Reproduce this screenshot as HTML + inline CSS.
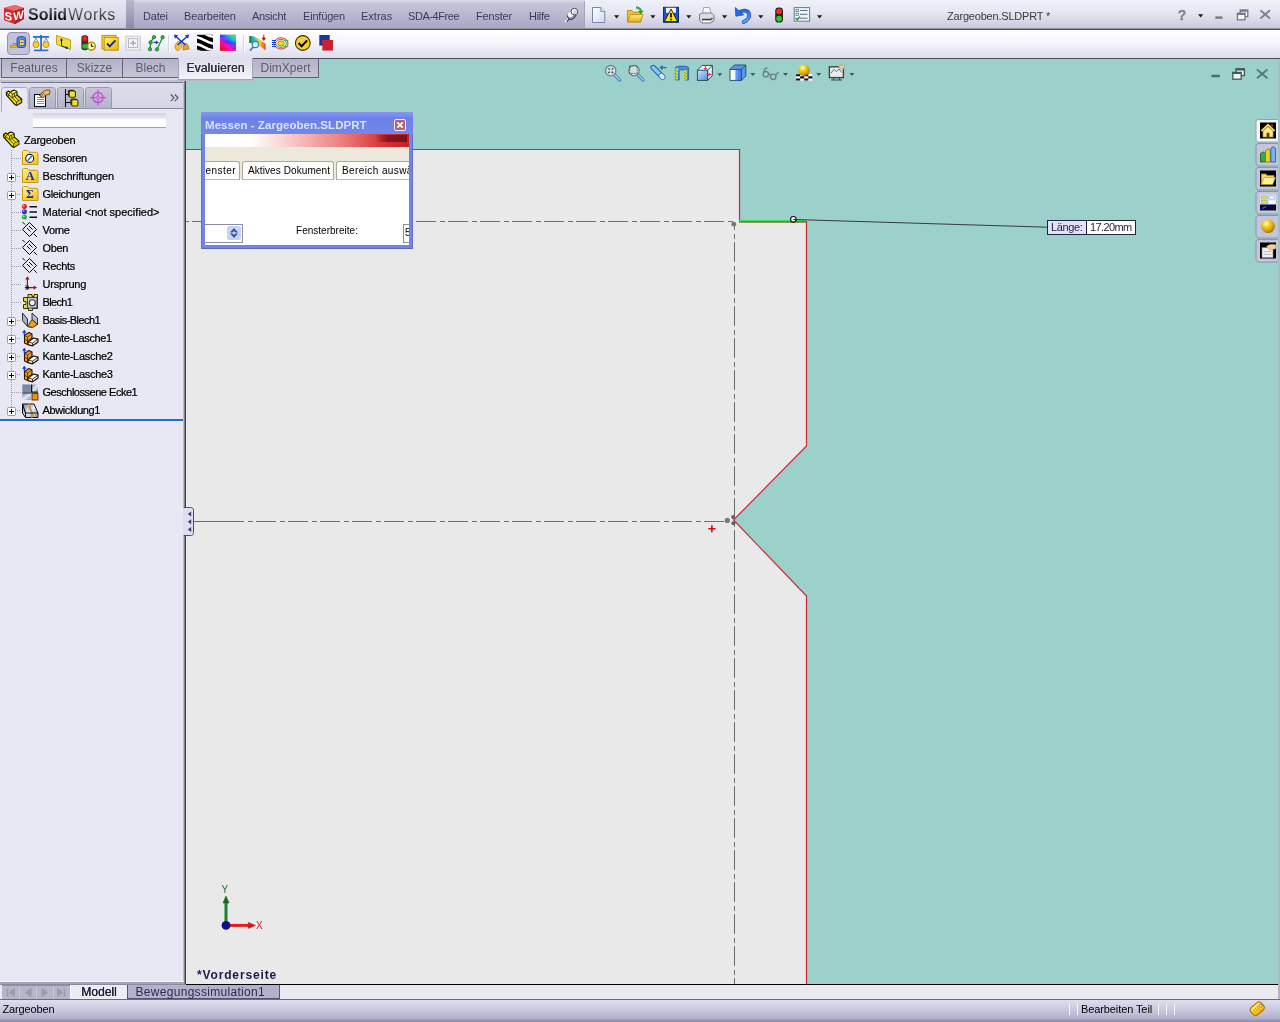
<!DOCTYPE html>
<html lang="de">
<head>
<meta charset="utf-8">
<title>SolidWorks - Zargeoben.SLDPRT</title>
<style>
html,body{margin:0;padding:0;}
body{width:1280px;height:1022px;overflow:hidden;position:relative;background:#e4e6f2;font-family:"Liberation Sans",sans-serif;font-size:11px;color:#000;}
.abs{position:absolute;}
#titlebar{position:absolute;left:0;top:0;width:1280px;height:30px;background:linear-gradient(#eeeef8 0%,#e2e2f0 40%,#c6c6da 85%,#b4b4c8 100%);}
#titlebar .bline{position:absolute;left:0;top:28px;width:1280px;height:2px;background:linear-gradient(#8e8ea6 0,#8e8ea6 50%,#50505e 50%,#50505e 100%);}
#logoarea{position:absolute;left:0;top:0;width:126px;height:28px;background:linear-gradient(#e6e6f2 0%,#dcdcea 50%,#c8c8dc 100%);}
#menusep{position:absolute;left:126px;top:0;width:8px;height:28px;background:linear-gradient(#b8b8cc,#8c8caa);}
#menubar{position:absolute;left:134px;top:0;width:450px;height:28px;background:linear-gradient(#dcdcea 0%,#c6c6da 12%,#b8b8d0 50%,#a8a8c4 100%);}
.menu{position:absolute;top:10px;font-size:11px;line-height:13px;color:#3a3c5c;white-space:nowrap;}
#tbright{position:absolute;left:584px;top:0;width:696px;height:28px;background:linear-gradient(#f0f0fa 0%,#e6e6f2 45%,#cacade 100%);}
#toolbar{position:absolute;left:0;top:30px;width:1280px;height:29px;background:linear-gradient(#ffffff 0%,#f6f6fc 40%,#dcdcec 100%);}
#toolbar .bline{position:absolute;left:0;top:28px;width:1280px;height:1px;background:#4e4e5c;}
#viewport{position:absolute;left:186px;top:59px;width:1094px;height:925px;background:#9bd0cb;overflow:hidden;}
.tree{-webkit-text-stroke:0.22px #000;}
.mtab{position:absolute;top:27px;height:19px;box-sizing:border-box;border:1px solid #a8a89c;border-bottom:1px solid #b8b8b0;border-radius:3px 3px 0 0;background:#fdfdfb;font-size:10px;line-height:16px;color:#000;white-space:nowrap;}
#leftpanel{position:absolute;left:0;top:59px;width:183px;height:925px;background:#e7e8f4;}
#splitter{position:absolute;left:183px;top:59px;width:3px;height:925px;background:linear-gradient(90deg,#bcbccc 0,#bcbccc 33.3%,#82828f 33.3%,#82828f 66.6%,#3e3e4e 66.6%);}
#cmtabs{position:absolute;left:0;top:59px;width:320px;height:24px;}
.cmtab{position:absolute;top:0;height:19px;border:1px solid #62627a;border-top:none;background:linear-gradient(#b2b2c8,#bebed2 60%,#c4c4d6);color:#5c5c6c;font-size:12px;line-height:19px;text-align:center;box-sizing:border-box;white-space:nowrap;}
.cmtab.act{text-shadow:0.35px 0 0 #30303c;top:-1px;height:22px;background:linear-gradient(#dedeea,#f2f2f8);border:1px solid #a4a4ba;border-top:none;color:#30303c;line-height:21px;letter-spacing:0.15px;box-shadow:0 1px 0 #b8b8c8;}
#bottombar{position:absolute;left:0;top:984px;width:1280px;height:16px;background:#eaeaf2;}
#statusbar{position:absolute;left:0;top:1000px;width:1280px;height:22px;background:linear-gradient(#dedeee 0%,#d0d0e4 30%,#c0c0d8 60%,#b0b0cc 84%,#9494b0 94%,#8c8ca6 100%);}
.tree{position:absolute;left:0;height:18px;line-height:18px;white-space:nowrap;font-size:11px;}
</style>
</head>
<body>
<div id="root" style="position:absolute;left:0;top:0;width:1280px;height:1022px;overflow:hidden;will-change:transform;">
<div id="titlebar">
  <div id="tbright"></div>
  <div id="logoarea"></div>
  <div id="menusep"></div>
  <div id="menubar"></div>
  <svg class="abs" style="left:3px;top:4px" width="23" height="21" viewBox="0 0 23 21">
    <defs><linearGradient id="cubeF" x1="0" y1="0" x2="0" y2="1"><stop offset="0" stop-color="#e8484a"/><stop offset="1" stop-color="#a81418"/></linearGradient></defs>
    <polygon points="1,4 12,1 21,4 21,15 12,20 1,16" fill="url(#cubeF)"/>
    <polygon points="1,4 12,1 21,4 11,7" fill="#f0686a"/>
    <polygon points="11,7 21,4 21,15 12,20" fill="#b81c20"/>
    <polygon points="1,4 11,7 12,20 1,16" fill="#d42c30"/>
    <text x="1.4" y="15.6" font-family="Liberation Sans, sans-serif" font-weight="bold" font-size="11.5" fill="#fff" transform="skewY(8)">S</text>
    <text x="10.200" y="19.2" font-family="Liberation Sans, sans-serif" font-weight="bold" font-size="11.5" fill="#fff" transform="skewY(-14)" textLength="10.500" lengthAdjust="spacingAndGlyphs">W</text>
  </svg>
  <div class="abs" id="swname" style="left:28px;top:5px;font-size:16px;line-height:20px;white-space:nowrap;"><b style="letter-spacing:0px;color:transparent;background:linear-gradient(#5a5a62 25%,#000 80%);-webkit-background-clip:text;background-clip:text;">Solid</b><span style="letter-spacing:0.55px;margin-left:1px;color:transparent;background:linear-gradient(#6e6e78 25%,#26262c 80%);-webkit-background-clip:text;background-clip:text;">Works</span></div>
  <span class="menu" style="left:143px;letter-spacing:-0.2px">Datei</span>
  <span class="menu" style="left:184px;letter-spacing:-0.14px">Bearbeiten</span>
  <span class="menu" style="left:252px;letter-spacing:-0.3px">Ansicht</span>
  <span class="menu" style="left:303px;letter-spacing:-0.18px">Einfügen</span>
  <span class="menu" style="left:361px;letter-spacing:0px">Extras</span>
  <span class="menu" style="left:408px;letter-spacing:-0.44px">SDA-4Free</span>
  <span class="menu" style="left:476px;letter-spacing:-0.19px">Fenster</span>
  <span class="menu" style="left:529px;letter-spacing:-0.3px">Hilfe</span>
  <div class="abs" id="doctitle" style="left:947px;top:10px;font-size:11px;line-height:13px;color:#3a3a42;white-space:nowrap;letter-spacing:-0.2px">Zargeoben.SLDPRT *</div>
  <div class="bline"></div>
<svg class="abs" id="stdicons" style="left:560px;top:0" width="720" height="30" viewBox="560 0 720 30">
  <defs>
    <linearGradient id="pg" x1="0" y1="0" x2="1" y2="1"><stop offset="0" stop-color="#ffffff"/><stop offset="1" stop-color="#d4dcec"/></linearGradient>
    <linearGradient id="fold" x1="0" y1="0" x2="0" y2="1"><stop offset="0" stop-color="#fff08a"/><stop offset="1" stop-color="#e8a818"/></linearGradient>
    <linearGradient id="und" x1="0" y1="0" x2="0" y2="1"><stop offset="0" stop-color="#2a6ae0"/><stop offset="1" stop-color="#6aa8f4"/></linearGradient>
  </defs>
  <!-- pin -->
  <path d="M565 22l3.400-3.400" stroke="#f4f4fa" stroke-width="1.400"/>
  <path d="M566.800 21.400l2.600-2.600" stroke="#30303c" stroke-width="1.200"/>
  <ellipse cx="571.600" cy="15.600" rx="4.300" ry="3.600" transform="rotate(-40 571.600 15.600)" fill="#8c8ca0" stroke="#34343f" stroke-width="0.900"/>
  <ellipse cx="570.600" cy="14.600" rx="3" ry="2.600" transform="rotate(-40 570.600 14.600)" fill="#f6f6fb"/>
  <circle cx="574.400" cy="11.600" r="3.300" fill="#f2f2f8" stroke="#3c3c48" stroke-width="0.900"/>
  <circle cx="575.200" cy="12.400" r="1.800" fill="#d0d0dc"/>
  <path d="M584.500 1v27" stroke="#a4a4ba" stroke-width="1"/>
  <!-- new -->
  <path d="M592.500 7.500h8.300l4 4v11h-12.300z" fill="url(#pg)" stroke="#7888a4" stroke-width="1"/>
  <path d="M600.800 7.500v4h4" fill="#e4e8f2" stroke="#7888a4" stroke-width="0.900"/>
  <polygon points="614,15.2 619.2,15.2 616.6,18.4" fill="#1a1a22"/>
  <!-- open -->
  <path d="M627.500 22v-11.500h4.500l1.500 1.800h7.500v9.700z" fill="#f0c030" stroke="#b88a10" stroke-width="0.900"/>
  <path d="M627.500 22l3-7.500h12.500l-2.500 7.500z" fill="url(#fold)" stroke="#c09010" stroke-width="0.900"/>
  <path d="M636 7.500c3 0 4.600 1 5 3.800" stroke="#20a830" stroke-width="1.800" fill="none"/>
  <path d="M637.800 10.800h6l-3 3.800z" fill="#20a830"/>
  <polygon points="650.3,15.2 655.5,15.2 652.9,18.4" fill="#1a1a22"/>
  <!-- save w/ warning -->
  <rect x="663.500" y="7.300" width="15" height="15" fill="#1c54c8" stroke="#0c2c80" stroke-width="1"/>
  <rect x="666" y="7.800" width="10" height="5" fill="#f4f4f8"/>
  <path d="M671 9l6.600 12.600h-13.200z" fill="#f8e020" stroke="#201800" stroke-width="0.900"/>
  <path d="M671 13v4.600M671 18.800v1.400" stroke="#000" stroke-width="1.600"/>
  <polygon points="686.2,15.2 691.4000000000001,15.2 688.8000000000001,18.4" fill="#1a1a22"/>
  <!-- printer -->
  <path d="M702.500 14l1-6.500h6l2 6.500z" fill="#f4f8ff" stroke="#8aa0c0" stroke-width="0.900"/>
  <path d="M699.500 14.500l3-1.500h9l2.500 2.500v5l-3.500 2.500h-8.500l-2.500-3z" fill="#dcdce4" stroke="#70707c" stroke-width="0.900"/>
  <path d="M702 19.500h8.500l2-1.600" stroke="#3c3c44" stroke-width="1.300" fill="none"/>
  <path d="M703.500 21.500h6" stroke="#fff" stroke-width="1.200"/>
  <polygon points="722,15.2 727.2,15.2 724.6,18.4" fill="#1a1a22"/>
  <!-- undo -->
  <path d="M738.200 13.200c4-3.600 9.800-3.400 10.800 0.800c0.800 3.600-2 6.400-5.400 8" stroke="#1a50c0" stroke-width="3.800" fill="none" stroke-linecap="round"/>
  <path d="M738.200 13.200c4-3.600 9.800-3.400 10.800 0.800c0.800 3.600-2 6.400-5.400 8" stroke="url(#und)" stroke-width="2.400" fill="none" stroke-linecap="round"/>
  <path d="M735.300 7.600l0.600 8.600 7.800-1.400z" fill="#2a6ae0" stroke="#1a50c0" stroke-width="0.800"/>
  <polygon points="758.2,15.2 763.4000000000001,15.2 760.8000000000001,18.4" fill="#1a1a22"/>
  <!-- traffic light -->
  <rect x="775.200" y="7.400" width="7.800" height="15.200" rx="3.400" fill="#2c2418"/>
  <circle cx="779.100" cy="11.300" r="2.900" fill="#f02828"/>
  <circle cx="779.100" cy="18.600" r="2.900" fill="#28c838"/>
  <!-- options -->
  <rect x="794.200" y="7.600" width="15.400" height="13.600" fill="#f0f4f8" stroke="#6a7a90" stroke-width="1"/>
  <path d="M800 10.500h7.500M800 14.300h7.500M800 18.200h7.500" stroke="#5a6a80" stroke-width="1"/>
  <rect x="796" y="9.300" width="2.400" height="2.400" fill="none" stroke="#5a6a80" stroke-width="0.700"/>
  <rect x="796" y="13.100" width="2.400" height="2.400" fill="none" stroke="#5a6a80" stroke-width="0.700"/>
  <path d="M795.600 18l1.600 1.800 2.600-3" stroke="#18a028" stroke-width="1.500" fill="none"/>
  <polygon points="817,15.2 822.2,15.2 819.6,18.4" fill="#1a1a22"/>
  <!-- window controls -->
  <text x="1177.800" y="20" font-family="Liberation Sans, sans-serif" font-weight="bold" font-size="14" fill="#8a8a9e" stroke="#77778c" stroke-width="0.400">?</text>
  <polygon points="1198,14.2 1203.2,14.2 1200.6,17.4" fill="#1a1a22"/>
  <rect x="1215.300" y="16.400" width="7.200" height="2.400" fill="#77778e"/>
  <g fill="#f4f4fa" stroke="#77778e" stroke-width="1.300"><rect x="1240.200" y="10" width="7.600" height="6.600"/><rect x="1237.400" y="13.200" width="7.600" height="6.600"/></g>
  <path d="M1240.200 10.700h7.600M1237.400 13.900h7.600" stroke="#77778e" stroke-width="2"/>
  <path d="M1260.400 10.200l9.600 8.400M1270 10.200l-9.600 8.400" stroke="#80809a" stroke-width="2"/>
</svg>
</div>
<div id="toolbar"><div class="bline"></div></div>
<svg class="abs" id="cmicons" style="left:0;top:30px" width="340" height="28" viewBox="0 30 340 28">
  <defs>
    <linearGradient id="yel" x1="0" y1="0" x2="1" y2="1"><stop offset="0" stop-color="#fff27a"/><stop offset="1" stop-color="#e8b800"/></linearGradient>
    <linearGradient id="rb1" gradientUnits="userSpaceOnUse" x1="220" y1="0" x2="236" y2="0"><stop offset="0" stop-color="#2070ff"/><stop offset="0.450" stop-color="#10e0c0"/><stop offset="1" stop-color="#50f010"/></linearGradient><linearGradient id="rb1b" gradientUnits="userSpaceOnUse" x1="220" y1="0" x2="236" y2="0"><stop offset="0" stop-color="#3030ff"/><stop offset="0.500" stop-color="#1090ff"/><stop offset="1" stop-color="#10e0a0"/></linearGradient>
    <linearGradient id="rb2" gradientUnits="userSpaceOnUse" x1="220" y1="0" x2="236" y2="0"><stop offset="0" stop-color="#e010e0"/><stop offset="0.500" stop-color="#5020ff"/><stop offset="1" stop-color="#1060ff"/></linearGradient>
    <linearGradient id="rb3" gradientUnits="userSpaceOnUse" x1="220" y1="0" x2="236" y2="0"><stop offset="0" stop-color="#ff1040"/><stop offset="0.500" stop-color="#ff10c0"/><stop offset="1" stop-color="#8020ff"/></linearGradient><linearGradient id="rb4" gradientUnits="userSpaceOnUse" x1="220" y1="0" x2="236" y2="0"><stop offset="0" stop-color="#e01010"/><stop offset="0.500" stop-color="#ff1050"/><stop offset="1" stop-color="#ff20d0"/></linearGradient>
    <linearGradient id="rbsweep" x1="0" y1="0" x2="1" y2="0"><stop offset="0" stop-color="#20a040"/><stop offset="0.3" stop-color="#30c0e0"/><stop offset="0.6" stop-color="#f0e020"/><stop offset="1" stop-color="#f04010"/></linearGradient>
  </defs>
  <!-- measure (selected) -->
  <rect x="7.5" y="32.5" width="22" height="22" rx="3.5" fill="#c2c2de" stroke="#9292b4"/>
  <rect x="10.5" y="45.5" width="8" height="2" fill="#f0c000" stroke="#b08000" stroke-width="0.6"/>
  <path d="M12.5 43.8h5" stroke="#707080" stroke-width="1"/>
  <rect x="17" y="36.7" width="8.6" height="10.8" rx="2.6" fill="#5a86d8" stroke="#2a4890" stroke-width="0.9"/>
  <rect x="19.6" y="39.6" width="4.6" height="5.8" rx="1" fill="#f4e060" stroke="#40506c" stroke-width="0.7"/>
  <path d="M20.6 42.5h2.6" stroke="#505050" stroke-width="0.9"/>
  <!-- scales -->
  <rect x="33" y="36" width="16" height="1.8" fill="#2a6ad8"/>
  <rect x="40.2" y="35" width="1.8" height="15" fill="#2a6ad8"/>
  <rect x="34" y="49.6" width="14.4" height="1.6" fill="#2a6ad8"/>
  <path d="M36 38l-2.6 5M36 38l2.6 5M46 38l-2.6 5M46 38l2.6 5" stroke="#4a6a9a" stroke-width="0.7" fill="none"/>
  <ellipse cx="36" cy="44.6" rx="3.1" ry="3" fill="#f6d030" stroke="#c07818" stroke-width="0.8"/>
  <ellipse cx="46" cy="44.6" rx="3.1" ry="3" fill="#f6d030" stroke="#c07818" stroke-width="0.8"/>
  <!-- section properties -->
  <polygon points="56.5,35.4 70.5,40 70.5,49.6 56.5,44.2" fill="#f4dc38" stroke="#b89818" stroke-width="0.9"/>
  <path d="M61.500 46v-6.500M61.500 46l6 2" stroke="#102070" stroke-width="1" fill="none"/><path d="M61.500 38.200l-1.700 2.400h3.400zM68.800 48.500l-2.700-2.200-0.700 2.400z" fill="#102070"/>
  <!-- traffic light + clock -->
  <rect x="81.4" y="35.2" width="6.8" height="15" rx="2.6" fill="#3c3424"/>
  <circle cx="84.8" cy="38.6" r="2.5" fill="#f02020"/>
  <circle cx="84.8" cy="46.2" r="2.5" fill="#20c030"/>
  <circle cx="91.4" cy="46.2" r="3.9" fill="#fff8c0" stroke="#c09000" stroke-width="1.6"/>
  <path d="M91.4 43.8v2.6h2" stroke="#000" stroke-width="1" fill="none"/>
  <!-- check -->
  <rect x="102" y="35.4" width="14" height="13.4" fill="#f8d848" stroke="#c09010" stroke-width="1"/>
  <rect x="104.2" y="37.4" width="14" height="12.8" fill="url(#yel)" stroke="#c09010" stroke-width="1"/>
  <path d="M107 43.4l2.8 3 5.6-6" stroke="#202090" stroke-width="1.8" fill="none"/>
  <!-- gray plus -->
  <rect x="125.900" y="36.200" width="14.400" height="13.800" fill="#f0f0f6" stroke="#c6c6d0" stroke-width="1"/>
  <rect x="128.500" y="38.700" width="9.200" height="8.800" fill="#f8f8fc" stroke="#b4b4be" stroke-width="1"/>
  <path d="M130.300 43.100h5.600M133.100 40.400v5.400" stroke="#b0b0ba" stroke-width="1.800"/>
  <!-- deviation -->
  <path d="M154 37.2l-3.4 5-0.6 7M162.6 37.2L157 49.4" stroke="#209030" stroke-width="1.3" fill="none"/>
  <g fill="#30c040" stroke="#106018" stroke-width="0.7"><circle cx="154" cy="37.2" r="1.7"/><circle cx="150.6" cy="42.4" r="1.7"/><circle cx="150" cy="49.2" r="1.7"/><circle cx="162.6" cy="37.2" r="1.7"/><circle cx="157" cy="49.4" r="1.7"/></g>
  <path d="M153.4 42.4h3.2" stroke="#1840d0" stroke-width="1.4"/><path d="M156 40.4l2.8 2-2.8 2z" fill="#1840d0"/>
  <!-- separators -->
  <path d="M168.500 35v18" stroke="#d4d4e2" stroke-width="1"/><path d="M169.500 35v18" stroke="#fafaff" stroke-width="1"/>
  <path d="M243.500 35v18" stroke="#d4d4e2" stroke-width="1"/><path d="M244.500 35v18" stroke="#fafaff" stroke-width="1"/>
  <!-- import diagnostics -->
  <path d="M176 44c2-4 5-3 6 0s-2 5-4 7c-3-2-4-4-2-7z" fill="#f4c040" stroke="#c07818" stroke-width="0.8"/>
  <path d="M184 44c2-2 4 0 5 5l-6 1z" fill="#f0a030" stroke="#b06818" stroke-width="0.8"/>
  <path d="M175.4 36l10 9M187.6 36l-10 9" stroke="#1838c8" stroke-width="1.5" fill="none"/>
  <path d="M174 34.6l4.2 0.6-3.4 3.6zM189 34.6l-4.2 0.6 3.4 3.6z" fill="#1838c8"/>
  <!-- zebra -->
  <clipPath id="zclip"><rect x="197" y="34.800" width="16" height="16"/></clipPath>
  <rect x="197" y="34.800" width="16" height="16" fill="#000"/>
  <g clip-path="url(#zclip)" fill="none" stroke="#fff" stroke-width="2.600">
    <path d="M196 30.400C202 30.400 207 36.800 214 36.800"/>
    <path d="M196 37.200C202 37.200 207 43.600 214 43.600"/>
    <path d="M196 44.000C202 44.000 207 50.400 214 50.400"/>
    <path d="M196 50.800C202 50.800 207 57.200 214 57.200"/>
  </g>
  <!-- rainbow -->
  <clipPath id="rclip"><rect x="220" y="34.800" width="16" height="16"/></clipPath>
  <filter id="rblur" x="-10%" y="-10%" width="120%" height="120%"><feGaussianBlur stdDeviation="1.100"/></filter>
  <rect x="220" y="34.800" width="16" height="16" fill="#ff20a0"/>
  <g clip-path="url(#rclip)"><g fill="none" stroke-width="4.600" filter="url(#rblur)">
    <path d="M218 31.500C226 31.500 230 36 238 36" stroke="url(#rb1)"/>
    <path d="M218 35.800C226 35.800 230 40.300 238 40.300" stroke="url(#rb1b)"/>
    <path d="M218 40C226 40 230 44.500 238 44.500" stroke="url(#rb2)"/>
    <path d="M218 44.400C226 44.400 230 48.900 238 48.900" stroke="url(#rb3)"/>
    <path d="M218 48.800C226 48.800 230 53.300 238 53.300" stroke="url(#rb4)"/>
  </g></g>
  <!-- draft analysis -->
  <path d="M250 36c4 0 9 2 15.600 8v6.400c-6-5-10-7-15.600-7.400z" fill="url(#rbsweep)"/>
  <path d="M250 36v7" stroke="#107030" stroke-width="1.4"/>
  <circle cx="255.400" cy="44.400" r="3.200" fill="#d8f0f8" fill-opacity="0.7" stroke="#4878b0" stroke-width="1.200"/>
  <path d="M253.200 47l-3.200 3.600" stroke="#4878b0" stroke-width="1.800"/>
  <path d="M263.800 34.600v5M262.300 38l1.500 2.400 1.500-2.400z" stroke="#c01010" stroke-width="0.9" fill="#c01010"/>
  <!-- undercut -->
  <ellipse cx="281" cy="43.400" rx="7" ry="5.600" fill="none" stroke="#e03020" stroke-width="1"/>
  <ellipse cx="281" cy="43.400" rx="5.400" ry="4" fill="none" stroke="#30a840" stroke-width="1"/>
  <ellipse cx="281" cy="43.400" rx="3.200" ry="2.500" fill="#f8e020" stroke="#e07010" stroke-width="1"/>
  <path d="M272 40.500h3.500M272 42.500h3.500M272 44.500h3.500M272 46.500h3.500" stroke="#1838c8" stroke-width="1" shape-rendering="crispEdges"/>
  <path d="M284 40.400h4.400M284 46.800h4.400" stroke="#30a840" stroke-width="0.9"/>
  <!-- check circle -->
  <circle cx="302.800" cy="43" r="7.400" fill="#f4d030" stroke="#403000" stroke-width="1.100"/>
  <path d="M298.600 43l3 3.200 5.600-5.800" stroke="#000" stroke-width="2" fill="none"/>
  <!-- squares -->
  <rect x="319.300" y="35" width="10.400" height="10.600" fill="#1c3a8c"/>
  <rect x="322.400" y="40" width="10.600" height="10.600" fill="#d02030"/>
</svg>
<div id="leftpanel"><div class="abs" style="left:0;top:0;width:184px;height:19px;background:#c8c8d8;"></div><div class="abs" style="left:0;top:19px;width:184px;height:2px;background:#dadae6;"></div><div class="abs" style="left:0;top:21px;width:184px;height:2px;background:#c0c0d0;"></div><div class="abs" style="left:1px;top:23px;width:183px;height:1px;background:#767690;"></div><div class="abs" style="left:1px;top:24px;width:182px;height:25px;background:linear-gradient(#dcdcea,#d6d6e6);"></div></div>
<svg class="abs" id="lpicons" style="left:0;top:78px" width="186" height="350" viewBox="0 78 186 350">
  <defs>
    <linearGradient id="tfold" x1="0" y1="0" x2="0.600" y2="1"><stop offset="0" stop-color="#fff690"/><stop offset="1" stop-color="#f6c432"/></linearGradient>
    <linearGradient id="tabg" x1="0" y1="0" x2="0" y2="1"><stop offset="0" stop-color="#c6c6d8"/><stop offset="1" stop-color="#b4b4c8"/></linearGradient>
    <linearGradient id="filt" x1="0" y1="0" x2="0" y2="1"><stop offset="0" stop-color="#d2d2de"/><stop offset="0.350" stop-color="#e8e8f0"/><stop offset="0.500" stop-color="#ffffff"/><stop offset="1" stop-color="#ffffff"/></linearGradient>
    <linearGradient id="metal" x1="0" y1="0" x2="1" y2="1"><stop offset="0" stop-color="#7888a8"/><stop offset="0.500" stop-color="#e8ecf4"/><stop offset="1" stop-color="#8090a8"/></linearGradient>
  </defs>
  <!-- FM tabs -->
  <path d="M28 108.500h155" stroke="#8088a0" stroke-width="1"/>
  <g fill="url(#tabg)" stroke="#9898b0" stroke-width="1">
    <path d="M29.500 108.500v-18c0-2 1-3 3-3h20c2 0 3 1 3 3v18z"/>
    <path d="M57.500 108.500v-18c0-2 1-3 3-3h20c2 0 3 1 3 3v18z"/>
    <path d="M85.500 108.500v-18c0-2 1-3 3-3h20c2 0 3 1 3 3v18z"/>
  </g>
  <path d="M1.500 112v-21.500c0-2 1-3 3-3h20.500c2 0 3 1 3 3v18" fill="#e8e9f5" stroke="#a8a8c0" stroke-width="1"/>
  <rect x="2" y="104" width="25.500" height="8" fill="#e8e9f5"/>
  <!-- tab icon 1: part -->
  <g transform="translate(6 89.8)" stroke-linejoin="round"><path d="M0.400 2.800L2.600 1.200L4.400 2.600L6 1L8.200 0.400L10.800 1.800L11.200 5.400L15.600 9.200L15.700 12.600L10.400 15.700L8.600 14.500L0.500 5.400Z" fill="#f4e020" stroke="#1c1800" stroke-width="1.200"/><path d="M0.400 2.800L2.400 4.600L10.400 12L10.400 15.700M10.400 12L15.600 9.200M2.400 4.600L2.500 6.800M2.400 4.600L4.400 2.600M4.400 2.600L6.400 4.400L6.200 7.800M6.400 4.400L8.400 3.400L10.800 1.800M8.400 3.400L8.600 6.800L11.200 5.400M8.600 6.800L6.200 7.800M8.600 6.800L12.600 10.400" fill="none" stroke="#2c2400" stroke-width="0.800"/><path d="M6.600 1.600L8.200 1L10 2L8.400 2.800Z" fill="#fff9a0"/><path d="M10.900 12.400L15.100 10.100L15.200 12.300L10.900 14.800Z" fill="#e0b800"/></g>
  <!-- tab icon 2: property manager -->
  <rect x="34.500" y="94.500" width="11" height="12" fill="#fff" stroke="#101020" stroke-width="1.100"/>
  <path d="M36.500 97.500h7M36.500 99.500h7M36.500 101.500h7M36.500 103.500h7" stroke="#5a9ae8" stroke-width="1" shape-rendering="crispEdges"/>
  <path d="M39.500 95.500l3.500-4c2-1.500 5-2 7-1l-0.500 4-4 0.500-2.500 3z" fill="#f4b868" stroke="#5a3a10" stroke-width="0.800"/><path d="M39.800 95.200l1.800 1.800M41.200 93.800l1.800 1.800M42.600 92.400l1.800 1.800" stroke="#3a2a10" stroke-width="0.800"/>
  <!-- tab icon 3: config manager -->
  <path d="M65.500 89v18M65.500 94.500h4M65.500 102.500h6" stroke="#101020" stroke-width="1.100" fill="none"/>
  <rect x="67.800" y="89.800" width="7" height="7" rx="1.800" fill="#2c2810"/><rect x="69.200" y="91" width="6.200" height="6.200" rx="1.200" fill="#f4e030" stroke="#3c3400" stroke-width="1.100"/>
  <rect x="70.300" y="98.600" width="7" height="7" rx="1.800" fill="#2c2810"/><rect x="71.700" y="99.800" width="6.200" height="6.200" rx="1.200" fill="#f4e030" stroke="#3c3400" stroke-width="1.100"/>
  <!-- tab icon 4: dimxpert -->
  <circle cx="98" cy="97.600" r="5" fill="none" stroke="#c850e0" stroke-width="1.500"/>
  <path d="M90 97.600h16M98 89.600v16" stroke="#c850e0" stroke-width="1.300"/>
  <circle cx="98" cy="97.600" r="1.600" fill="#b4b4c8" stroke="#c850e0" stroke-width="0.800"/>
  <!-- chevrons -->
  <path d="M170.800 94.500l3.200 3.300-3.200 3.300M174.800 94.500l3.200 3.300-3.200 3.300" stroke="#55556a" stroke-width="1.200" fill="none"/>
  <!-- filter bar -->
  <rect x="33" y="113" width="133" height="14" fill="url(#filt)"/>
  <path d="M33 127.500h133" stroke="#a0a0b0" stroke-width="1"/>
  <!-- tree dotted lines -->
  <path d="M11.500 150v260" stroke="#9c9cac" stroke-width="1" stroke-dasharray="1 1" shape-rendering="crispEdges"/>
  <path d="M12 158.5h9" stroke="#9c9cac" stroke-width="1" stroke-dasharray="1 1" shape-rendering="crispEdges"/><path d="M16.5 176.5h4.5" stroke="#9c9cac" stroke-width="1" stroke-dasharray="1 1" shape-rendering="crispEdges"/><path d="M16.5 194.5h4.5" stroke="#9c9cac" stroke-width="1" stroke-dasharray="1 1" shape-rendering="crispEdges"/><path d="M12 212.5h9" stroke="#9c9cac" stroke-width="1" stroke-dasharray="1 1" shape-rendering="crispEdges"/><path d="M12 230.5h9" stroke="#9c9cac" stroke-width="1" stroke-dasharray="1 1" shape-rendering="crispEdges"/><path d="M12 248.5h9" stroke="#9c9cac" stroke-width="1" stroke-dasharray="1 1" shape-rendering="crispEdges"/><path d="M12 266.5h9" stroke="#9c9cac" stroke-width="1" stroke-dasharray="1 1" shape-rendering="crispEdges"/><path d="M12 284.5h9" stroke="#9c9cac" stroke-width="1" stroke-dasharray="1 1" shape-rendering="crispEdges"/><path d="M12 302.5h9" stroke="#9c9cac" stroke-width="1" stroke-dasharray="1 1" shape-rendering="crispEdges"/><path d="M16.5 320.5h4.5" stroke="#9c9cac" stroke-width="1" stroke-dasharray="1 1" shape-rendering="crispEdges"/><path d="M16.5 338.5h4.5" stroke="#9c9cac" stroke-width="1" stroke-dasharray="1 1" shape-rendering="crispEdges"/><path d="M16.5 356.5h4.5" stroke="#9c9cac" stroke-width="1" stroke-dasharray="1 1" shape-rendering="crispEdges"/><path d="M16.5 374.5h4.5" stroke="#9c9cac" stroke-width="1" stroke-dasharray="1 1" shape-rendering="crispEdges"/><path d="M12 392.5h9" stroke="#9c9cac" stroke-width="1" stroke-dasharray="1 1" shape-rendering="crispEdges"/><path d="M16.5 410.5h4.5" stroke="#9c9cac" stroke-width="1" stroke-dasharray="1 1" shape-rendering="crispEdges"/>
  <!-- root icon -->
  <g transform="translate(3.2 131.7)" stroke-linejoin="round"><path d="M0.400 2.800L2.600 1.200L4.400 2.600L6 1L8.200 0.400L10.800 1.800L11.200 5.400L15.600 9.200L15.700 12.600L10.400 15.700L8.600 14.500L0.500 5.400Z" fill="#f4e020" stroke="#1c1800" stroke-width="1.200"/><path d="M0.400 2.800L2.400 4.600L10.400 12L10.400 15.700M10.400 12L15.600 9.200M2.400 4.600L2.500 6.800M2.400 4.600L4.400 2.600M4.400 2.600L6.400 4.400L6.200 7.800M6.400 4.400L8.400 3.400L10.800 1.800M8.400 3.400L8.600 6.800L11.200 5.400M8.600 6.800L6.200 7.800M8.600 6.800L12.600 10.400" fill="none" stroke="#2c2400" stroke-width="0.800"/><path d="M6.600 1.600L8.200 1L10 2L8.400 2.800Z" fill="#fff9a0"/><path d="M10.900 12.400L15.100 10.100L15.200 12.300L10.900 14.800Z" fill="#e0b800"/></g>
  <!-- sensoren -->
  <path d="M22.500 164.5v-12.500c0-1 0.500-1.500 1.500-1.500h3.500l1.500 1.800h7.500c1 0 1.500 0.500 1.500 1.500v10.700z" fill="url(#tfold)" stroke="#c89818" stroke-width="1"/>
  <circle cx="29.700" cy="158.400" r="4" fill="#fff" stroke="#181c30" stroke-width="1.100"/>
  <path d="M27.600 160.800l4.200-4.800" stroke="#2860d0" stroke-width="1.300"/>
  <path d="M22.500 182.5v-12.500c0-1 0.500-1.500 1.500-1.500h3.500l1.500 1.800h7.500c1 0 1.500 0.500 1.500 1.500v10.700z" fill="url(#tfold)" stroke="#c89818" stroke-width="1"/>
  <path d="M22.500 200.5v-12.500c0-1 0.500-1.500 1.500-1.500h3.500l1.500 1.800h7.500c1 0 1.500 0.500 1.500 1.500v10.700z" fill="url(#tfold)" stroke="#c89818" stroke-width="1"/>
  <!-- material -->
  <circle cx="24.400" cy="206.600" r="2.500" fill="#e02020"/><circle cx="24.400" cy="211.800" r="2.500" fill="#2030d0"/><circle cx="24.400" cy="217" r="2.500" fill="#20b030"/>
  <circle cx="23.700" cy="205.900" r="0.900" fill="#ffb0b0"/><circle cx="23.700" cy="211.100" r="0.900" fill="#a0b0ff"/><circle cx="23.700" cy="216.300" r="0.900" fill="#b0ffb0"/>
  <path d="M29.500 206.800h7.500M29.500 212h7.500M29.500 217.200h7.500" stroke="#101010" stroke-width="1.600"/>
  <path d="M22.5 229.5L29.5 222.5L36.5 229.5L29.5 236.5Z M27.0 228.0l3.5 3.5 M29.0 226.0l3.500 3.500 M22.5 222.0l2.500 2.500 M34.0 234.0l2.800 2.800" fill="none" stroke="#000" stroke-width="1"/><path d="M22.5 247.5L29.5 240.5L36.5 247.5L29.5 254.5Z M27.0 246.0l3.5 3.5 M29.0 244.0l3.500 3.500 M22.5 240.0l2.500 2.500 M34.0 252.0l2.800 2.800" fill="none" stroke="#000" stroke-width="1"/><path d="M22.5 265.5L29.5 258.5L36.5 265.5L29.5 272.5Z M27.0 264.0l3.5 3.5 M29.0 262.0l3.500 3.500 M22.5 258.0l2.500 2.500 M34.0 270.0l2.800 2.800" fill="none" stroke="#000" stroke-width="1"/>
  <!-- origin -->
  <path d="M27.400 287.600v-9M27.400 287.600h7" stroke="#a01020" stroke-width="1.200"/>
  <path d="M25.200 279.600l2.200-3.400 2.200 3.400zM33.600 285.400l3.400 2.200-3.400 2.200z" fill="#a01020"/>
  <path d="M24.800 287.600h4.600M27.200 285.200v4.800M25.400 285.800l3.600 3.600M29 285.800l-3.600 3.600" stroke="#101010" stroke-width="0.900"/>
  <!-- blech1 -->
  <path d="M23.500 297.500h4.500v-3h4v2h2v-2h3.500v14h-5v2h-4v-2h-5v-4h2.500v-3h-2.500z" fill="#e4d458" stroke="#3a3000" stroke-width="1"/>
  <rect x="27.500" y="297.500" width="9.500" height="10.500" fill="#c8c8d0" stroke="#383838" stroke-width="0.900"/>
  <circle cx="32.300" cy="302.800" r="3" fill="#f8f8ff" stroke="#303850" stroke-width="1.100"/>
  <!-- basis-blech -->
  <path d="M22.500 313l5 6v7.500l-5-6z" fill="#a8b0d0" stroke="#202030" stroke-width="0.900"/>
  <path d="M32 313l5.500 5v6.500l-5.500-5z" fill="#b0b8d4" stroke="#202030" stroke-width="0.900"/>
  <path d="M27.500 326.500l4.500-7 5.500 5-5 3z" fill="#f0a020" stroke="#302000" stroke-width="0.900"/>
  <path d="M22.500 320.500l5 6 5 1" fill="none" stroke="#605020" stroke-width="0.900"/>
  <path d="M24.500 335.5l4.500-3 3 1.500v7.500l-4.500 3-3-1.500z" fill="#f0a020" stroke="#301800" stroke-width="1.100" stroke-linejoin="round"/><path d="M24.500 335.5l3 1.500 4.500-3M27.500 337.0v7.500M24.500 339.3l3 1.500 4.500-3" stroke="#301800" stroke-width="0.700" fill="none"/><path d="M28 342.0l5.500-4 4.500 1.200v2.800l-5.500 3.800-4.500-1.200z" fill="#f8f8f8" stroke="#181000" stroke-width="1.200" stroke-linejoin="round"/><path d="M28 342.0l4.500 1.200 5.500-4M32.500 343.2v2.600" stroke="#181000" stroke-width="0.800" fill="none"/><path d="M24.300 331.1v4" stroke="#1838c8" stroke-width="1.300"/><path d="M22.100 332.7l2.200-3 2.200 3z" fill="#1838c8"/><path d="M24.500 353.5l4.500-3 3 1.500v7.500l-4.500 3-3-1.500z" fill="#f0a020" stroke="#301800" stroke-width="1.100" stroke-linejoin="round"/><path d="M24.500 353.5l3 1.500 4.500-3M27.500 355.0v7.500M24.500 357.3l3 1.500 4.500-3" stroke="#301800" stroke-width="0.700" fill="none"/><path d="M28 360.0l5.500-4 4.500 1.200v2.800l-5.500 3.800-4.500-1.200z" fill="#f8f8f8" stroke="#181000" stroke-width="1.200" stroke-linejoin="round"/><path d="M28 360.0l4.500 1.200 5.500-4M32.500 361.2v2.600" stroke="#181000" stroke-width="0.800" fill="none"/><path d="M24.300 349.1v4" stroke="#1838c8" stroke-width="1.300"/><path d="M22.100 350.7l2.200-3 2.200 3z" fill="#1838c8"/><path d="M24.500 371.5l4.500-3 3 1.500v7.500l-4.500 3-3-1.500z" fill="#f0a020" stroke="#301800" stroke-width="1.100" stroke-linejoin="round"/><path d="M24.500 371.5l3 1.500 4.500-3M27.500 373.0v7.500M24.500 375.3l3 1.500 4.500-3" stroke="#301800" stroke-width="0.700" fill="none"/><path d="M28 378.0l5.500-4 4.500 1.200v2.800l-5.500 3.800-4.500-1.200z" fill="#f8f8f8" stroke="#181000" stroke-width="1.200" stroke-linejoin="round"/><path d="M28 378.0l4.500 1.200 5.500-4M32.500 379.2v2.600" stroke="#181000" stroke-width="0.800" fill="none"/><path d="M24.300 367.1v4" stroke="#1838c8" stroke-width="1.300"/><path d="M22.100 368.7l2.200-3 2.200 3z" fill="#1838c8"/>
  <!-- closed corner -->
  <rect x="22.300" y="384.400" width="8.500" height="8" fill="#7888a8"/>
  <rect x="32.500" y="384.400" width="5.500" height="7" fill="url(#metal)"/>
  <path d="M31.600 384.400v7.800h6.400" stroke="#101010" stroke-width="1.300" fill="none"/>
  <rect x="22.300" y="393.600" width="8.500" height="6.400" fill="url(#metal)"/>
  <rect x="32" y="393.600" width="6" height="6.400" fill="#f09010" stroke="#302000" stroke-width="0.800"/>
  <path d="M22.300 393h9" stroke="#101010" stroke-width="1"/>
  <!-- flat pattern -->
  <path d="M22.500 404h11.500l4 9v4.500h-12.500l-3-4.500z" fill="url(#metal)" stroke="#101010" stroke-width="1"/>
  <path d="M29 404c0.500 3 1.500 6 3 9v4.500" stroke="#c89040" stroke-width="2" fill="none"/>
  <path d="M25.500 413h12.500M25.500 413v4.500M22.500 404l3 9" stroke="#101010" stroke-width="1.100" fill="none"/>
  <rect x="7.500" y="173.5" width="8" height="8" rx="1" fill="#fdfdfd" stroke="#9a9aa8" stroke-width="1"/><path d="M9 177.5h5M11.500 175.0v5" stroke="#000" stroke-width="1" shape-rendering="crispEdges"/><rect x="7.500" y="191.5" width="8" height="8" rx="1" fill="#fdfdfd" stroke="#9a9aa8" stroke-width="1"/><path d="M9 195.5h5M11.500 193.0v5" stroke="#000" stroke-width="1" shape-rendering="crispEdges"/><rect x="7.500" y="317.5" width="8" height="8" rx="1" fill="#fdfdfd" stroke="#9a9aa8" stroke-width="1"/><path d="M9 321.5h5M11.500 319.0v5" stroke="#000" stroke-width="1" shape-rendering="crispEdges"/><rect x="7.500" y="335.5" width="8" height="8" rx="1" fill="#fdfdfd" stroke="#9a9aa8" stroke-width="1"/><path d="M9 339.5h5M11.500 337.0v5" stroke="#000" stroke-width="1" shape-rendering="crispEdges"/><rect x="7.500" y="353.5" width="8" height="8" rx="1" fill="#fdfdfd" stroke="#9a9aa8" stroke-width="1"/><path d="M9 357.5h5M11.500 355.0v5" stroke="#000" stroke-width="1" shape-rendering="crispEdges"/><rect x="7.500" y="371.5" width="8" height="8" rx="1" fill="#fdfdfd" stroke="#9a9aa8" stroke-width="1"/><path d="M9 375.5h5M11.500 373.0v5" stroke="#000" stroke-width="1" shape-rendering="crispEdges"/><rect x="7.500" y="407.5" width="8" height="8" rx="1" fill="#fdfdfd" stroke="#9a9aa8" stroke-width="1"/><path d="M9 411.5h5M11.500 409.0v5" stroke="#000" stroke-width="1" shape-rendering="crispEdges"/>
  <!-- rollback bar -->
  <rect x="0" y="419" width="183" height="2" fill="#2a6ac8"/>
</svg>
<div class="tree" style="left:24px;top:131px;letter-spacing:-0.21px">Zargeoben</div>
<div class="tree" style="left:42.500px;top:149px;letter-spacing:-0.35px">Sensoren</div>
<div class="tree" style="left:42.500px;top:167px;letter-spacing:-0.14px">Beschriftungen</div>
<div class="tree" style="left:42.500px;top:185px;letter-spacing:-0.37px">Gleichungen</div>
<div class="tree" style="left:42.500px;top:203px;letter-spacing:0.01px">Material &lt;not specified&gt;</div>
<div class="tree" style="left:42.500px;top:221px;letter-spacing:-0.32px">Vorne</div>
<div class="tree" style="left:42.500px;top:239px;letter-spacing:-0.37px">Oben</div>
<div class="tree" style="left:42.500px;top:257px;letter-spacing:-0.3px">Rechts</div>
<div class="tree" style="left:42.500px;top:275px;letter-spacing:-0.19px">Ursprung</div>
<div class="tree" style="left:42.500px;top:293px;letter-spacing:-0.65px">Blech1</div>
<div class="tree" style="left:42.500px;top:311px;letter-spacing:-0.55px">Basis-Blech1</div>
<div class="tree" style="left:42.500px;top:329px;letter-spacing:-0.36px">Kante-Lasche1</div>
<div class="tree" style="left:42.500px;top:347px;letter-spacing:-0.3px">Kante-Lasche2</div>
<div class="tree" style="left:42.500px;top:365px;letter-spacing:-0.3px">Kante-Lasche3</div>
<div class="tree" style="left:42.500px;top:383px;letter-spacing:-0.48px">Geschlossene Ecke1</div>
<div class="tree" style="left:42.500px;top:401px;letter-spacing:-0.38px">Abwicklung1</div>
<div class="abs" style="left:25px;top:170px;width:10px;text-align:center;font:bold 12px/13px 'Liberation Serif',serif;color:#1c2c90;">A</div>
<div class="abs" style="left:25px;top:188px;width:10px;text-align:center;font:bold 12px/13px 'Liberation Serif',serif;color:#1c2c90;">Σ</div>
<div id="splitter"></div>
<div class="abs" style="left:0;top:981px;width:184px;height:1px;background:#f4f4fa;"></div><div class="abs" style="left:0;top:982px;width:184px;height:2px;background:#a4a4b8;"></div>
<div id="viewport">
<svg class="abs" style="left:0;top:0" width="1094" height="925" viewBox="186 59 1094 925" shape-rendering="auto">
  <polygon points="186,149.5 739.5,149.5 739.5,221 806.5,221 806.5,446 733.5,520 806.5,596 806.5,984 186,984" fill="#e9e9e9"/>
  <g fill="none" stroke="#d02838" stroke-width="1.2">
    <polyline points="186,149.5 739.5,149.5 739.5,221"/>
    <polyline points="806.5,221 806.5,446 733.5,520 806.5,596 806.5,984"/>
  </g>
  <g stroke="#6e6e6e" stroke-width="1" fill="none" stroke-dasharray="20 4 5 3" shape-rendering="crispEdges">
    <line x1="160" y1="221.5" x2="733" y2="221.5"/>
    <line x1="160" y1="521.5" x2="724" y2="521.5"/>
    <line x1="186" y1="521.5" x2="243" y2="521.5" stroke-dasharray="none"/>
    <line x1="734.5" y1="226" x2="734.5" y2="984" stroke-dashoffset="16.4"/>
  </g>
  <line x1="739" y1="221.5" x2="806" y2="221.5" stroke="#7a7a10" stroke-width="2.4"/>
  <line x1="739" y1="220.6" x2="806" y2="220.6" stroke="#2fe070" stroke-width="1.2"/>
  <line x1="797" y1="219.6" x2="1047" y2="227.2" stroke="#3a3a40" stroke-width="1"/>
  <circle cx="793.4" cy="219.3" r="2.8" fill="#fff" stroke="#111" stroke-width="1.1"/>
  <line x1="793.4" y1="219.6" x2="796.5" y2="219.6" stroke="#111" stroke-width="1"/>
  <circle cx="733.8" cy="224.2" r="2.4" fill="#777"/>
  <circle cx="727.3" cy="520.4" r="2.6" fill="#787878"/>
  <circle cx="733.2" cy="517" r="2" fill="#6a5a5e"/>
  <circle cx="733.4" cy="523.2" r="2" fill="#6a5a5e"/>
  <path d="M708.4 528.8h7M711.9 525.3v7" stroke="#e00000" stroke-width="1.6" fill="none"/>
  <!-- heads-up toolbar -->
  <defs>
    <linearGradient id="bluef" x1="0" y1="0" x2="1" y2="1"><stop offset="0" stop-color="#c8e4fc"/><stop offset="1" stop-color="#4a90e0"/></linearGradient>
    <linearGradient id="bluef2" x1="0" y1="0" x2="1" y2="0"><stop offset="0" stop-color="#ffffff"/><stop offset="0.45" stop-color="#f4f8ff"/><stop offset="0.5" stop-color="#6aa0f0"/><stop offset="1" stop-color="#3a78e0"/></linearGradient>
    <radialGradient id="gold" cx="0.38" cy="0.3" r="0.75"><stop offset="0" stop-color="#fffbd0"/><stop offset="0.35" stop-color="#f4d020"/><stop offset="0.8" stop-color="#c89000"/><stop offset="1" stop-color="#8a6000"/></radialGradient>
  </defs>
  <g>
    <path d="M614.600 74.800l5 5" stroke="#3a78c0" stroke-width="3.200" stroke-linecap="round"/>
    <path d="M614.600 74.800l5 5" stroke="#9cd0f4" stroke-width="1.600" stroke-linecap="round"/>
    <circle cx="610.700" cy="70.700" r="5.200" fill="#d4dedc" stroke="#708888" stroke-width="1.300"/>
    <path d="M608.400 68.400l1.200 1.200M613 68.400l-1.200 1.200M608.400 73l1.200-1.200M613 73l-1.200-1.200" stroke="#2a3a3a" stroke-width="1.300"/>
    <path d="M638 74.800l5 5" stroke="#3a78c0" stroke-width="3.200" stroke-linecap="round"/>
    <path d="M638 74.800l5 5" stroke="#9cd0f4" stroke-width="1.600" stroke-linecap="round"/>
    <circle cx="634" cy="70.600" r="5.200" fill="#d4dedc" stroke="#708888" stroke-width="1.300"/>
    <rect x="629.600" y="66" width="7.600" height="7.400" fill="none" stroke="#3a4a4a" stroke-width="0.900" stroke-dasharray="1.500 1.300"/>
    <!-- previous view -->
    <path d="M653.200 67.600l8.400 8.400" stroke="#2a68b8" stroke-width="5.600" stroke-linecap="round"/>
    <path d="M653.200 67.600l8.400 8.400" stroke="#8ac4f4" stroke-width="3.400" stroke-linecap="round"/>
    <ellipse cx="662" cy="76.400" rx="2.600" ry="3.600" transform="rotate(-45 662 76.400)" fill="#d8f0ff" stroke="#2a68b8" stroke-width="0.900"/>
    <path d="M660.400 67.600h6" stroke="#2a68b8" stroke-width="1.300"/><path d="M659.400 67.600l3.200-2.600v5.200z" fill="#2a68b8"/>
    <!-- section view -->
    <path d="M675.400 67.600c0-2 13.200-2 13.200 0v12.400h-3.800v-9c0-1.600-5.600-1.600-5.600 0v9h-3.800z" fill="#4a8ae0" stroke="#2a58a0" stroke-width="0.800"/>
    <rect x="675.400" y="68.400" width="2.600" height="11" fill="#f0e020"/>
    <rect x="684" y="70.400" width="2.800" height="9.600" fill="#e8e020"/>
    <path d="M675.400 70l2.600 2M675.400 73l2.600 2M675.400 76l2.600 2M684 72l2.800 2M684 75l2.800 2M684 78l2.800 2" stroke="#30a040" stroke-width="0.800"/>
    <!-- view orientation cube -->
    <path d="M697.400 70.200l4.600-4.800h10.400v10.200l-4.800 4.800" fill="#e8f0f0" stroke="#2c5060" stroke-width="1"/>
    <path d="M707.600 70.200l4.800-4.800M707.600 70.200v10.200" stroke="#2c5060" stroke-width="1"/>
    <rect x="697.400" y="70.200" width="10.200" height="10.200" fill="url(#bluef)" stroke="#2c5060" stroke-width="1"/>
    <path d="M705.400 65.600v3.600M704 68l1.400 1.800 1.400-1.800M712 74.600h-3.400M709.800 73.200l-1.800 1.400 1.800 1.400" stroke="#d02030" stroke-width="0.900" fill="none"/>
    <polygon points="717.3,73.2 722.3,73.2 719.8,76.2" fill="#3a5a5e"/>
    <!-- display style cube -->
    <path d="M730 69.400l4.400-4.400h11.400v10.800l-4.400 4.600" fill="#5a98ec" stroke="#2c5070" stroke-width="1"/>
    <path d="M741.400 69.400l4.400-4.400" stroke="#2c5070" stroke-width="1"/>
    <rect x="730" y="69.400" width="11.400" height="11" fill="url(#bluef2)" stroke="#2c5070" stroke-width="1"/>
    <polygon points="750.3,73 755.3,73 752.8,76" fill="#3a5a5e"/>
    <!-- glasses -->
    <g fill="none" stroke="#668686" stroke-width="1.400">
      <circle cx="765.800" cy="74.200" r="2.700"/><circle cx="773.200" cy="76.800" r="2.700"/>
      <path d="M768.400 74.600c0.800-0.800 1.600-0.400 2.200 0.800M763.800 72.200c0.400-3 2-4.600 3.600-4M775.800 75.800c0.800-3 2.200-3.600 3-2.800"/>
    </g>
    <polygon points="783,73 788,73 785.5,76" fill="#3a5a5e"/>
    <!-- gold ball -->
    <rect x="796" y="74.200" width="16.400" height="6.400" fill="#fff"/>
    <path d="M796 74.200h4.100v2.100h-4.100zM804.200 74.200h4.100v2.100h-4.100zM800.100 76.300h4.100v2.100h-4.100zM808.300 76.300h4.100v2.100h-4.100zM796 78.400h4.100v2.200h-4.100zM804.200 78.400h4.100v2.200h-4.100z" fill="#101010"/>
    <circle cx="804" cy="70.200" r="5.700" fill="url(#gold)"/>
    <polygon points="816.2,73 821.2,73 818.7,76" fill="#3a5a5e"/>
    <!-- view settings monitor -->
    <rect x="829.400" y="66.800" width="14" height="10.800" fill="#e8ecec" stroke="#3c4848" stroke-width="1.400"/>
    <path d="M831 73l3-3.600 2.400 2.400 2.600-2.800 3 3.600" stroke="#5a6a6a" stroke-width="0.900" fill="none"/>
    <path d="M831 80h11M833.500 78v2M839.500 78v2" stroke="#3c4848" stroke-width="1"/>
    <path d="M838.600 66.400c1.600-1.800 5-1.800 6.400 0.200l-1.600 2.400-3.600-0.400z" fill="#f0cc98" stroke="#b08850" stroke-width="0.600"/>
    <polygon points="849.4,73 854.4,73 851.9,76" fill="#3a5a5e"/>
    <!-- doc window controls -->
    <rect x="1211.400" y="74.800" width="8.400" height="2.400" fill="#4c6a6c"/>
    <g fill="#eef4f4" stroke="#40585c" stroke-width="1.300"><rect x="1236" y="68.800" width="8.400" height="6.800"/><rect x="1232.800" y="72.400" width="8.400" height="6.800"/></g>
    <path d="M1236 69.500h8.400M1232.800 73.100h8.400" stroke="#40585c" stroke-width="2"/>
    <path d="M1257 69.400l10.400 8.800M1267.400 69.400l-10.400 8.800" stroke="#587878" stroke-width="1.900"/>
  </g>
  <!-- task pane tabs -->
  <g id="tptabs">
    <path d="M1280 119.500h-21c-2 0-3 1-3 3v16.500c0 2 1 3 3 3h21z" fill="#f4f4fa" stroke="#9c9cb0" stroke-width="1"/>
    <path d="M1280 143.5h-21c-2 0-3 1-3 3v16.500c0 2 1 3 3 3h21z" fill="#c4c4dc" stroke="#9090a8" stroke-width="1"/>
    <path d="M1280 167.5h-21c-2 0-3 1-3 3v16.500c0 2 1 3 3 3h21z" fill="#c4c4dc" stroke="#9090a8" stroke-width="1"/>
    <path d="M1280 191.5h-21c-2 0-3 1-3 3v16.500c0 2 1 3 3 3h21z" fill="#c4c4dc" stroke="#9090a8" stroke-width="1"/>
    <path d="M1280 215.5h-21c-2 0-3 1-3 3v16.500c0 2 1 3 3 3h21z" fill="#c4c4dc" stroke="#9090a8" stroke-width="1"/>
    <path d="M1280 239.5h-21c-2 0-3 1-3 3v16.500c0 2 1 3 3 3h21z" fill="#c4c4dc" stroke="#9090a8" stroke-width="1"/>
    
    <!-- icons -->
    <rect x="1260" y="122.500" width="16" height="16" fill="#000"/>
    <path d="M1261.400 131l6.600-6.200 6.600 6.200" stroke="#f4d860" stroke-width="1.800" fill="none"/>
    <path d="M1263 131v6h10v-6l-5-4.600z" fill="#f8e890" stroke="#c09820" stroke-width="0.700"/>
    <rect x="1266.600" y="132.800" width="2.800" height="4.200" fill="#604000"/>
    <path d="M1272 124.200v3" stroke="#c04020" stroke-width="1.400"/>
    <!-- chart -->
    <path d="M1260.500 153.500l2.600-1.600 2.400 1.600v8.500h-5z" fill="#30b040" stroke="#106020" stroke-width="0.800"/>
    <path d="M1265.500 150.600l2.400-1.600 2.400 1.600v11.400h-4.800z" fill="#f0d020" stroke="#907000" stroke-width="0.800"/>
    <path d="M1270.800 148.400l2.400-1.600 2.400 1.600v13.600h-4.800z" fill="#78b0f0" stroke="#2050a0" stroke-width="0.800"/>
    <!-- folder -->
    <rect x="1260" y="170.500" width="16" height="16" fill="#000"/>
    <path d="M1261.400 184.600v-10.600h4.400l1.200 1.600h7v2" fill="#f4d860" stroke="#c09820" stroke-width="0.700"/>
    <path d="M1261.400 184.600l2.600-7h11.400l-2.800 7z" fill="#fcf0a0" stroke="#c09820" stroke-width="0.700"/>
    <!-- view palette -->
    <rect x="1260" y="194.500" width="16" height="16" fill="#d8e4f4"/>
    <rect x="1260" y="204.500" width="16" height="6" fill="#080830"/>
    <rect x="1261.600" y="196" width="5.600" height="3" fill="#f0d850" stroke="#80a0c0" stroke-width="0.500"/>
    <rect x="1269" y="196" width="5.600" height="3" fill="#f8f8ff" stroke="#80a0c0" stroke-width="0.500"/>
    <rect x="1261.600" y="200.600" width="5.600" height="3" fill="#f0d850" stroke="#80a0c0" stroke-width="0.500"/>
    <rect x="1269" y="200.600" width="6" height="3" fill="#fff"/>
    <path d="M1262 208.400l4.400-1.800" stroke="#2040e0" stroke-width="1.600"/>
    <!-- gold ball -->
    <circle cx="1268" cy="226.200" r="6.800" fill="url(#gold)"/>
    <!-- custom props -->
    <rect x="1260" y="242.500" width="16" height="16" fill="#000"/>
    <rect x="1262" y="247.600" width="11" height="10" fill="#f0f0f0" stroke="#808080" stroke-width="0.600"/>
    <path d="M1263.600 251.600h7.800M1263.600 254.400h7.800" stroke="#b0b0b0" stroke-width="0.800"/>
    <path d="M1266.500 246.800c1.600-2.400 5.500-3.400 9.500-2v3.800l-6 1.600z" fill="#f0d0a0" stroke="#b08850" stroke-width="0.500"/>
  </g>
  <!-- triad -->
  <g id="triad">
    <path d="M226 925.400h24" stroke="#e02020" stroke-width="3"/>
    <path d="M248.400 922.400l7 3-7 3z" fill="#d01818" stroke="#d01818" stroke-width="0.600"/>
    <path d="M226 925.400v-24" stroke="#208030" stroke-width="3"/>
    <path d="M223 903l3-7 3 7z" fill="#186828" stroke="#186828" stroke-width="0.600"/>
    <circle cx="226" cy="925.400" r="4.400" fill="#10108a"/>
  </g>
</svg>
<div class="abs" style="left:1092px;top:0;width:2px;height:925px;background:#a6bec6;"></div>
<div class="abs" id="lenlabel" style="left:861px;top:161px;width:89px;height:15px;box-sizing:border-box;border:1px solid #1c2440;background:#fff;font-size:11px;line-height:13px;color:#1c2040;white-space:nowrap;">
  <span class="abs" style="left:0;top:0;width:38px;height:13px;background:#e4e0f6;border-right:1px solid #1c2440;"></span>
  <span class="abs" style="left:3px;top:0;letter-spacing:-0.35px;">Länge:</span>
  <span class="abs" style="left:42px;top:0;letter-spacing:-0.6px;">17.20mm</span>
</div>
<div class="abs" style="left:35.500px;top:825px;font-size:10px;color:#207030;line-height:11px;">Y</div>
<div class="abs" style="left:70px;top:861px;font-size:10px;color:#e02020;line-height:11px;">X</div>
<div class="abs" style="left:11px;top:909px;font-weight:bold;font-size:12px;letter-spacing:0.850px;color:#1a1a50;">*Vorderseite</div>
</div>
<div id="messen" class="abs" style="left:201px;top:112px;width:212px;height:137px;box-sizing:border-box;background:#7484e4;border-radius:3px 3px 0 0;overflow:hidden;box-shadow:inset 1px 0 0 #6470cc,inset -1px 0 0 #6470cc,inset 0 -1px 0 #5c68c0;">
  <div class="abs" style="left:0;top:0;width:212px;height:22px;background:linear-gradient(#8a98ee 0%,#6c80e6 30%,#7488ea 100%);"></div>
  <div class="abs" style="left:4px;top:6px;font-weight:bold;font-size:11.5px;line-height:14px;color:#d6e2ff;white-space:nowrap;letter-spacing:0.05px;">Messen - Zargeoben.SLDPRT</div>
  <div class="abs" style="left:193px;top:7px;width:12px;height:12px;box-sizing:border-box;border:1px solid #f4f0f8;border-radius:2px;background:#b4607c;"></div>
  <svg class="abs" style="left:193px;top:7px" width="12" height="12" viewBox="0 0 12 12"><path d="M3.300 3.300l5.400 5.400M8.700 3.300l-5.400 5.400" stroke="#fff" stroke-width="1.700"/></svg>
  <div class="abs" id="mbody" style="left:4px;top:22px;width:204px;height:111px;background:#fff;overflow:hidden;">
    <div class="abs" style="left:0;top:0;width:204px;height:13px;background:linear-gradient(90deg,#ffffff 0%,#ffffff 22%,#f8c0c0 45%,#ec7c7c 68%,#d83838 86%,#c02028 100%);"></div>
    <div class="abs" style="left:170px;top:1px;width:32px;height:7px;background:linear-gradient(90deg,rgba(120,16,24,0),#8a1420 40%,#7a1018);"></div>
    <div class="abs" style="left:0;top:13px;width:204px;height:32px;background:#ece9dc;"></div>
    <div class="mtab" style="left:-21px;width:56px;"><span style="position:absolute;left:14px;top:1px;letter-spacing:0.450px">Fenster</span></div>
    <div class="mtab" style="left:37px;width:92px;"><span style="position:absolute;left:5px;top:1px;letter-spacing:0.090px">Aktives Dokument</span></div>
    <div class="mtab" style="left:131px;width:110px;"><span style="position:absolute;left:5px;top:1px;letter-spacing:0.400px">Bereich auswählen</span></div>
    <div class="abs" style="left:-10px;top:90px;width:48px;height:19px;box-sizing:border-box;border:1px solid #8a8e9e;background:#fff;"></div>
    <div class="abs" style="left:22px;top:92px;width:14px;height:14px;background:#c4d2fc;border-radius:2px;"></div>
    <svg class="abs" style="left:22px;top:92px" width="14" height="14" viewBox="0 0 14 14"><path d="M3.600 6.200l3.400-3.600 3.400 3.600h-1.600l-1.800-1.400-1.800 1.400zM3.600 7.800l3.400 3.600 3.400-3.600h-1.600l-1.800 1.400-1.800-1.400z" fill="#33457a" stroke="#33457a" stroke-width="0.500"/></svg>
    <div class="abs" style="left:91px;top:90px;font-size:10px;line-height:13px;letter-spacing:0.020px;color:#000;white-space:nowrap;">Fensterbreite:</div>
    <div class="abs" style="left:198px;top:90px;width:30px;height:19px;box-sizing:border-box;border:1px solid #8a8e9e;background:#fff;font-size:10px;line-height:15px;padding-left:1px;">5</div>
  </div>
</div>
<svg class="abs" style="left:183px;top:505px" width="13" height="33" viewBox="183 505 13 33">
  <path d="M184 507.500h6.500c2 0 3 1 3 3v22c0 2-1 3-3 3h-6.500z" fill="#dedef2" stroke="#4c4c5c" stroke-width="1"/>
  <rect x="183" y="508" width="2.500" height="27" fill="#dedef2"/>
  <path d="M191.200 511.500v5l-3.400-2.500zM191.200 519.300v5l-3.400-2.500zM191.200 527.100v5l-3.400-2.500z" fill="#3c3c6c"/>
</svg>
<div id="cmtabs">
  
  <div class="cmtab" style="left:1px;width:66px;">Features</div>
  <div class="cmtab" style="left:66px;width:57px;">Skizze</div>
  <div class="cmtab" style="left:122px;width:57px;">Blech</div>
  <div class="cmtab" style="left:252px;width:67px;">DimXpert</div>
  <div class="cmtab act" style="left:178px;width:75px;">Evaluieren</div>
</div>
<div id="bottombar">
  <div class="abs" style="left:0;top:0;width:1280px;height:1px;background:#000;"></div>
  <div class="abs" style="left:0;top:0;width:186px;height:1px;background:#8a8a9c;"></div>
  <div class="abs" style="left:2px;top:1px;width:68px;height:14px;background:#b6b6ca;border-top:1px solid #8e8ea4;box-sizing:border-box;"></div>
  <svg class="abs" style="left:0;top:0" width="72" height="16" viewBox="0 0 72 16">
    <g stroke="#c8c8d8" stroke-width="1"><path d="M19.500 2v13M36.500 2v13M53.500 2v13"/></g>
    <g fill="#9a9ab2" stroke="#9a9ab2"><path d="M7.500 4.500v8" stroke-width="1.600" fill="none"/><path d="M14.500 4.500v8l-5-4z"/><path d="M31 4.500v8l-5.500-4z"/><path d="M42 4.500v8l5.500-4z"/><path d="M57.500 4.500v8l5-4z"/><path d="M64.500 4.500v8" stroke-width="1.600" fill="none"/></g>
  </svg>
  <div class="abs" style="left:70px;top:1px;width:57px;height:14px;background:#ececf6;border-left:1px solid #f8f8ff;box-sizing:border-box;font-size:12px;line-height:14px;color:#1c1c34;text-align:center;text-shadow:0.3px 0 0 #1c1c34;">Modell</div>
  <div class="abs" style="left:127px;top:1px;width:153px;height:14px;background:#b2b2ce;border:1px solid #55556e;border-top:none;box-sizing:border-box;font-size:12px;line-height:14px;color:#2c2c4c;text-align:left;padding-left:7.500px;letter-spacing:0.300px;white-space:nowrap;">Bewegungssimulation1</div>
  <div class="abs" style="left:1278px;top:0;width:2px;height:16px;background:#b4b4c4;"></div>
</div>
<div id="statusbar">
  <div class="abs" style="left:0;top:-1px;width:1280px;height:1px;background:#6a6a7e;"></div>
  <div class="abs" style="left:2.500px;top:3px;font-size:11px;line-height:13px;letter-spacing:-0.150px;">Zargeoben</div>
  <div class="abs" style="left:1081px;top:3px;font-size:11px;line-height:13px;letter-spacing:-0.1px;white-space:nowrap;">Bearbeiten Teil</div>
  <svg class="abs" style="left:1060px;top:0" width="220" height="22" viewBox="1060 1000 220 22">
    <g stroke="#f4f4fc" stroke-width="1"><path d="M1069.500 1003v12M1077.500 1003v12M1158.500 1003v12M1166.500 1003v12M1174.500 1003v12"/></g>
    <defs><linearGradient id="tagg" x1="0" y1="0" x2="0" y2="1"><stop offset="0" stop-color="#fff468"/><stop offset="1" stop-color="#f0b008"/></linearGradient></defs>
    <rect x="1250.500" y="1003.900" width="13.600" height="9.600" rx="3.400" transform="rotate(-40 1257.300 1008.700)" fill="url(#tagg)" stroke="#b47808" stroke-width="1.200"/>
    <circle cx="1260.400" cy="1005.900" r="1.500" fill="#ffe8d8" stroke="#c05828" stroke-width="0.800"/>
    <path d="M1253.200 1009.400l2.600 3.200M1255 1007.900l2.600 3.200M1256.800 1006.400l2.600 3.200" stroke="#c89010" stroke-width="0.900"/>
  </svg>
</div>
</div>
</body>
</html>
